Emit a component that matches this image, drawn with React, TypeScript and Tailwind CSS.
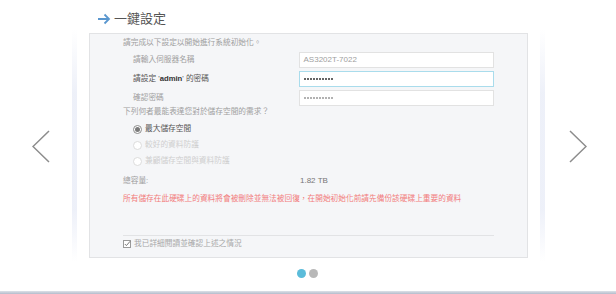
import React from "react";

const font = { fontFamily: '"Liberation Sans", "Noto Sans CJK TC", sans-serif' };

function Radio({ label, checked, disabled }: { label: string; checked?: boolean; disabled?: boolean }) {
  return (
    <div className="h-[16px] flex items-center pl-[10px]">
      <span
        className={
          "w-[9px] h-[9px] rounded-full border flex items-center justify-center bg-white " +
          (disabled ? "border-[#dcdcdc]" : "border-[#8c8c8c]")
        }
      >
        {checked && <span className="w-[5px] h-[5px] rounded-full bg-[#7a7a7a]" />}
      </span>
      <span className={"ml-[3px] " + (disabled ? "text-[#cfcfcf]" : "text-[#555]")}>{label}</span>
    </div>
  );
}

function Dots({ dark }: { dark?: boolean }) {
  return (
    <div className="flex gap-[1px]">
      {Array.from({ length: 10 }).map((_, i) => (
        <span key={i} className={"w-[2px] h-[2px] rounded-full " + (dark ? "bg-[#333]" : "bg-[#999]")} />
      ))}
    </div>
  );
}

function Field({ label, value, focused, dark }: { label: React.ReactNode; value?: string; focused?: boolean; dark?: boolean }) {
  return (
    <div className="h-[16px] flex items-center">
      <div className={"w-[176px] pl-[10px] " + (dark ? "text-[#555]" : "text-[#a0a0a0]")}>{label}</div>
      <div
        className={
          "w-[196px] h-[16px] bg-white border flex items-center px-[4px] " +
          (focused ? "border-[#a9dcec]" : "border-[#e2e2e2]")
        }
      >
        {value ? <span className="text-[8px] text-[#a0a0a0]">{value}</span> : <Dots dark={focused} />}
      </div>
    </div>
  );
}

export default function App() {
  return (
    <div className="w-[616px] h-[294px] bg-white flex flex-col overflow-hidden text-[7.7px]" style={font}>
      <div className="flex h-[291px]">
        <div className="w-[72px] flex items-center pl-[32px] pt-[2px]">
          <svg width="18" height="33" viewBox="0 0 18 33" fill="none">
            <path d="M17 1 L1 16.5 L17 32" stroke="#8c8c8c" strokeWidth="1.5" />
          </svg>
        </div>
        <div className="w-[5px] bg-[linear-gradient(to_bottom,transparent_10%,#e6eaf6_32%,#e6eaf6_72%,transparent_90%)] opacity-70" />
        <div className="w-[463px] bg-white px-[12px]">
          <div className="pt-[10px] h-[33px] flex items-start">
            <div className="flex items-center h-[18px] pl-[8px]">
              <svg width="14" height="12" viewBox="0 0 14 12" fill="none">
                <path d="M1 6 H12 M7.5 1.5 L12 6 L7.5 10.5" stroke="#5a97cf" strokeWidth="1.8" />
              </svg>
              <span className="ml-[3px] text-[13px] leading-[18px] text-[#555]">一鍵設定</span>
            </div>
          </div>
          <div className="h-[225px] bg-[#f5f6f8] border border-[#e2e3e5] px-[33px] pt-[3px]">
            <div className="leading-[12px] text-[#a0a0a0]">請完成以下設定以開始進行系統初始化。</div>
            <div className="mt-[3px] flex flex-col gap-[3px]">
              <Field label="請輸入伺服器名稱" value="AS3202T-7022" />
              <Field
                dark
                focused
                label={
                  <span>
                    請設定 '<b className="text-[#333]">admin</b>' 的密碼
                  </span>
                }
              />
              <Field label="確認密碼" />
            </div>
            <div className="leading-[12px] text-[#a0a0a0]">下列何者最能表達您對於儲存空間的需求？</div>
            <div className="mt-[3px]">
              <Radio label="最大儲存空間" checked />
              <Radio label="較好的資料防護" disabled />
              <Radio label="兼顧儲存空間與資料防護" disabled />
            </div>
            <div className="mt-[6px] leading-[12px] flex">
              <span className="w-[177px] text-[#a0a0a0]">總容量:</span>
              <span className="text-[#777] text-[8px]">1.82 TB</span>
            </div>
            <div className="mt-[6px] leading-[12px] text-[#f27c7c] whitespace-nowrap">
              所有儲存在此硬碟上的資料將會被刪除並無法被回復，在開始初始化前請先備份該硬碟上重要的資料
            </div>
            <div className="mt-[30px] border-t border-[#e2e3e5]" />
            <div className="mt-[2px] leading-[12px] flex items-center text-[#a8a8a8]">
              <svg width="8" height="8" viewBox="0 0 8 8" fill="none">
                <rect x="0.5" y="0.5" width="7" height="7" stroke="#9a9a9a" fill="white" />
                <path d="M1.8 4 L3.4 5.6 L7.2 1.2" stroke="#777" strokeWidth="1" />
              </svg>
              <span className="ml-[3px]">我已詳細閱讀並確認上述之情況</span>
            </div>
          </div>
          <div className="mt-[11px] flex justify-center gap-[3px] pr-[3px]">
            <span className="w-[9px] h-[9px] rounded-full bg-[#5bbcda]" />
            <span className="w-[9px] h-[9px] rounded-full bg-[#b8b8b8]" />
          </div>
        </div>
        <div className="w-[5px] bg-[linear-gradient(to_bottom,transparent_10%,#e6eaf6_32%,#e6eaf6_72%,transparent_90%)] opacity-70" />
        <div className="flex-1 flex items-center pl-[24px] pt-[2px]">
          <svg width="18" height="33" viewBox="0 0 18 33" fill="none">
            <path d="M1 1 L17 16.5 L1 32" stroke="#8c8c8c" strokeWidth="1.5" />
          </svg>
        </div>
      </div>
      <div className="h-[3px] bg-[linear-gradient(to_bottom,#dde1e8,#b4bccb)]" />
    </div>
  );
}
